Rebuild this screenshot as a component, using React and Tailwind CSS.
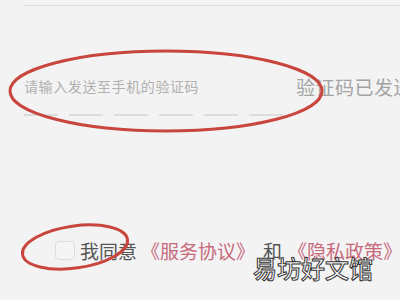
import React from "react";

const font = { fontFamily: '"Noto Sans CJK SC", "Noto Sans", sans-serif' };

const App = () => {
  const dashes = [0, 1, 2, 3, 4, 5];

  return (
    <div
      className="relative w-[400px] h-[300px] overflow-hidden bg-[#f3f3f3]"
      style={font}
    >
      {/* top divider */}
      <div className="ml-[24px] mt-[5px] border-t border-[#dedede]" />

      {/* code input */}
      <div className="flex items-center pl-[24px] mt-[70px] h-[20px]">
        <span className="w-[272px] shrink-0 text-[14px] text-[#b0b0b0] leading-none tracking-[0.6px] whitespace-nowrap">
          请输入发送至手机的验证码
        </span>
        <span className="shrink-0 text-[19px] text-[#a3a3a3] leading-none whitespace-nowrap tracking-[0.5px]">
          验证码已发送
        </span>
      </div>

      {/* code boxes */}
      <div className="flex gap-[11px] pl-[24px] mt-[18px]">
        {dashes.map((d) => (
          <div key={d} className="w-[34px] h-[2px] bg-[#dcdcdc]" />
        ))}
      </div>

      {/* agreement */}
      <div className="flex items-center pl-[55px] mt-[125px] text-[19px] leading-none whitespace-nowrap">
        <div className="w-[20px] h-[19px] shrink-0 rounded-[4px] border border-[#dcdcdc] bg-[#f5f5f5] mr-[5px]" />
        <span className="text-[#555555]">我同意</span>
        <span className="text-[#c76a7c] ml-[4px]">《服务协议》</span>
        <span className="text-[#555555] ml-[8px]">和</span>
        <span className="text-[#c76a7c] ml-[6px]">《隐私政策》</span>
      </div>

      {/* annotation circles */}
      <svg
        className="absolute left-0 top-0 pointer-events-none"
        width="400"
        height="300"
        viewBox="0 0 400 300"
      >
        <ellipse
          cx="166"
          cy="91"
          rx="156"
          ry="40"
          fill="none"
          stroke="#c9463e"
          strokeWidth="3"
        />
        <ellipse
          cx="75"
          cy="247"
          rx="53"
          ry="21"
          fill="none"
          stroke="#c9463e"
          strokeWidth="3"
          transform="rotate(-8 75 247)"
        />
      </svg>

      {/* watermark */}
      <div
        className="absolute left-[253px] top-[256px] text-[24px] leading-none text-white"
        style={{ WebkitTextStroke: "1px #333", fontWeight: 500 }}
      >
        易坊好文馆
      </div>
    </div>
  );
};

export default App;
